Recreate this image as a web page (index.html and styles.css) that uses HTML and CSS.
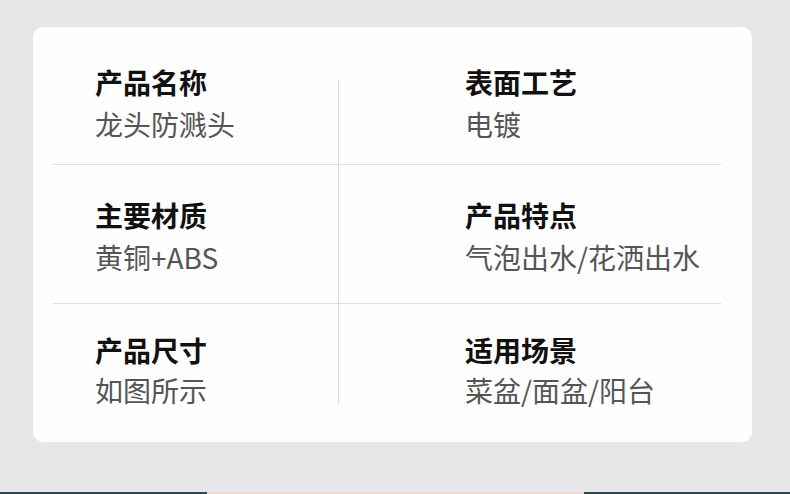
FILE: index.html
```html
<!DOCTYPE html>
<html lang="zh-CN">
<head>
<meta charset="utf-8">
<link rel="stylesheet" href="styles.css">
</head>
<body>
<div class="page">
  <div class="card">
    <div class="grid">
      <div class="vline"></div>
      <div class="cell left r1"><div class="label">产品名称</div><div class="value">龙头防溅头</div></div>
      <div class="cell right r1"><div class="label">表面工艺</div><div class="value">电镀</div></div>
      <div class="hline h1"></div>
      <div class="cell left r2"><div class="label">主要材质</div><div class="value">黄铜+ABS</div></div>
      <div class="cell right r2"><div class="label">产品特点</div><div class="value">气泡出水/花洒出水</div></div>
      <div class="hline h2"></div>
      <div class="cell left r3"><div class="label">产品尺寸</div><div class="value">如图所示</div></div>
      <div class="cell right r3"><div class="label">适用场景</div><div class="value">菜盆/面盆/阳台</div></div>
    </div>
  </div>
  <div class="spacer"></div>
  <div class="strip">
    <div class="strip-dark a"></div>
    <div class="strip-light"></div>
    <div class="strip-dark b"></div>
  </div>
</div>
</body>
</html>
```
FILE: styles.css
```css
* { box-sizing: border-box; margin: 0; padding: 0; }
html, body { width: 790px; height: 494px; overflow: hidden; }
body {
  background: #e7e6e9;
  font-family: "Noto Sans CJK SC", "Noto Sans", sans-serif;
}
.page {
  height: 494px;
  display: flex;
  flex-direction: column;
  padding-top: 27px;
}
.card {
  margin-left: 33px;
  width: 719px;
  height: 415px;
  background: #fefefe;
  border-radius: 10px;
  padding-left: 20px;
  padding-right: 31px;
}
.grid {
  display: grid;
  grid-template-columns: 285px 1px 382px;
  grid-template-rows: 137px 1px 138px 1px 138px;
}
.vline {
  grid-column: 2;
  grid-row: 1 / 6;
  background: #dcdcdc;
  margin-top: 53px;
  margin-bottom: 37px;
}
.hline {
  grid-column: 1 / 4;
  background: #dddddd;
  height: 1px;
}
.hline.h1 { grid-row: 2; }
.hline.h2 { grid-row: 4; }
.cell.left { grid-column: 1; padding-left: 42px; }
.cell.right { grid-column: 3; padding-left: 126px; }
.cell.r1 { grid-row: 1; padding-top: 34px; }
.cell.r2 { grid-row: 3; padding-top: 29px; }
.cell.r3 { grid-row: 5; padding-top: 25px; }
.label {
  font-size: 28px;
  line-height: 42px;
  font-weight: 700;
  color: #111111;
  white-space: nowrap;
}
.value {
  font-size: 28px;
  line-height: 42px;
  font-weight: 400;
  color: #555555;
  white-space: nowrap;
}
.r3 .value { line-height: 38px; }
.spacer { flex: 1; }
.strip {
  display: flex;
  height: 2px;
}
.strip-dark { background: #2e4a4c; }
.strip-dark.a { width: 207px; }
.strip-light { width: 377px; background: #eadcd2; }
.strip-dark.b { flex: 1; }
```
